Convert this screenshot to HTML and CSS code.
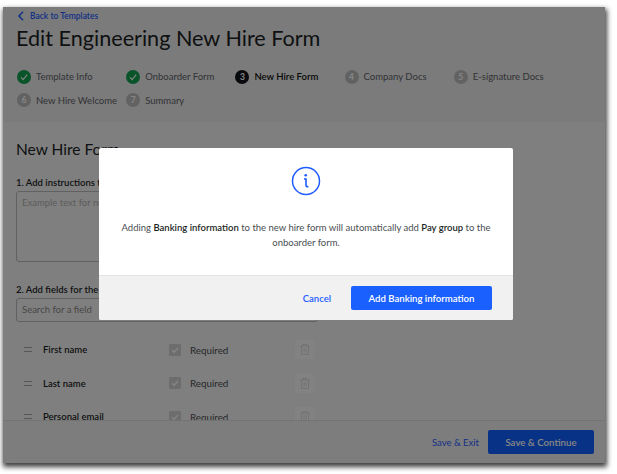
FILE: index.html
```html
<!DOCTYPE html>
<html lang="en">
<head>
<meta charset="utf-8">
<title>Edit Engineering New Hire Form</title>
<link rel="stylesheet" href="styles.css">
</head>
<body>
<div class="window">
  <header class="head">
    <a class="back" href="#">
      <svg class="back-icon" width="8" height="10" viewBox="0 0 8 10"><path d="M6 .8 2 5l4 4.200" fill="none" stroke="#1f5cff" stroke-width="1.500"/></svg>
      Back to Templates
    </a>
    <h1 class="title">Edit Engineering New Hire Form</h1>
    <ol class="steps">
      <li class="step"><span class="dot dot-done"><svg width="10" height="10" viewBox="0 0 10 10"><path d="M2 5.400 4.100 7.600 8.200 2.600" fill="none" stroke="#fff" stroke-width="1.100"/></svg></span>Template Info</li>
      <li class="step"><span class="dot dot-done"><svg width="10" height="10" viewBox="0 0 10 10"><path d="M2 5.400 4.100 7.600 8.200 2.600" fill="none" stroke="#fff" stroke-width="1.100"/></svg></span>Onboarder Form</li>
      <li class="step step-current"><span class="dot dot-current">3</span>New Hire Form</li>
      <li class="step"><span class="dot">4</span>Company Docs</li>
      <li class="step"><span class="dot">5</span>E-signature Docs</li>
      <li class="step"><span class="dot">6</span>New Hire Welcome</li>
      <li class="step"><span class="dot">7</span>Summary</li>
    </ol>
  </header>

  <main class="form">
    <h2 class="form-title">New Hire Form</h2>
    <p class="label">1. Add instructions to the new hire</p>
    <div class="textarea">Example text for new hires</div>
    <p class="label label-fields">2. Add fields for the new hire</p>
    <div class="search">Search for a field</div>
    <ul class="fields">
      <li class="field">
        <svg class="drag" width="8" height="5" viewBox="0 0 8 5"><path d="M0 .5h8M0 4.500h8" stroke="#a8a8a8"/></svg>
        <span class="field-name">First name</span>
        <span class="check"><svg width="8" height="8" viewBox="0 0 8 8"><path d="M1 4.200 3 6.200 7 2" fill="none" stroke="#fff" stroke-width="1.300"/></svg></span>
        <span class="req">Required</span>
        <span class="trash"><svg width="10" height="11" viewBox="0 0 10 11"><path d="M0 2h10M3 2V.5h4V2M1.500 2v8.500h7V2M4 4v4.500M6 4v4.500" fill="none" stroke="#d8d8d8" stroke-width=".9"/></svg></span>
      </li>
      <li class="field">
        <svg class="drag" width="8" height="5" viewBox="0 0 8 5"><path d="M0 .5h8M0 4.500h8" stroke="#a8a8a8"/></svg>
        <span class="field-name">Last name</span>
        <span class="check"><svg width="8" height="8" viewBox="0 0 8 8"><path d="M1 4.200 3 6.200 7 2" fill="none" stroke="#fff" stroke-width="1.300"/></svg></span>
        <span class="req">Required</span>
        <span class="trash"><svg width="10" height="11" viewBox="0 0 10 11"><path d="M0 2h10M3 2V.5h4V2M1.500 2v8.500h7V2M4 4v4.500M6 4v4.500" fill="none" stroke="#d8d8d8" stroke-width=".9"/></svg></span>
      </li>
      <li class="field">
        <svg class="drag" width="8" height="5" viewBox="0 0 8 5"><path d="M0 .5h8M0 4.500h8" stroke="#a8a8a8"/></svg>
        <span class="field-name">Personal email</span>
        <span class="check"><svg width="8" height="8" viewBox="0 0 8 8"><path d="M1 4.200 3 6.200 7 2" fill="none" stroke="#fff" stroke-width="1.300"/></svg></span>
        <span class="req">Required</span>
        <span class="trash"><svg width="10" height="11" viewBox="0 0 10 11"><path d="M0 2h10M3 2V.5h4V2M1.500 2v8.500h7V2M4 4v4.500M6 4v4.500" fill="none" stroke="#d8d8d8" stroke-width=".9"/></svg></span>
      </li>
    </ul>
  </main>

  <footer class="foot">
    <a class="foot-link" href="#">Save &amp; Exit</a>
    <a class="foot-btn" href="#">Save &amp; Continue</a>
  </footer>

  <div class="scrim"></div>

  <section class="modal" role="dialog">
    <div class="modal-body">
      <svg class="info" width="30" height="30" viewBox="0 0 30 30">
        <circle cx="15" cy="15" r="13.500" fill="none" stroke="#1f5cff" stroke-width="1.500"/>
        <circle cx="14.700" cy="9.300" r="1.300" fill="#1f5cff"/>
        <path d="M13 13h2v6.200q0 1.800 2.400 1.300" fill="none" stroke="#1f5cff" stroke-width="1.600"/>
      </svg>
      <p class="modal-text">Adding <b>Banking information</b> to the new hire form will automatically add <b>Pay group</b> to the onboarder form.</p>
    </div>
    <div class="modal-foot">
      <a class="cancel" href="#">Cancel</a>
      <a class="primary" href="#">Add Banking information</a>
    </div>
  </section>
</div>
</body>
</html>
```

FILE: styles.css
```css
* { box-sizing: border-box; }

html, body { height: 100%; }

body {
  margin: 0;
  padding: 7px 12px 11px 3px;
  background: #fff;
  font-family: Lato, "Liberation Sans", sans-serif;
  color: #1b1f24;
  overflow: hidden;
}

.window {
  position: relative;
  width: 602px;
  height: 456px;
  display: flex;
  flex-direction: column;
  background: #f4f4f4;
  overflow: hidden;
  box-shadow: 1px 3px 5px 1px rgba(0, 0, 0, .75);
}

a { text-decoration: none; }

.head {
  height: 115px;
  flex: none;
  background: #ececec;
  padding: 3px 13px 0;
}

.back {
  display: flex;
  align-items: center;
  gap: 5px;
  height: 11px;
  margin-left: 1px;
  font-size: 8.500px;
  font-weight: 600;
  color: #1f5cff;
}

.title {
  margin: 3px 0 0;
  font-size: 21.600px;
  line-height: 28px;
  font-weight: 400;
}

.steps {
  list-style: none;
  display: flex;
  flex-wrap: wrap;
  margin: 13px 0 0 1px;
  padding: 0;
}

.step {
  width: 109.200px;
  height: 23.500px;
  display: flex;
  align-items: center;
  gap: 5px;
  font-size: 9.500px;
  color: #5f6368;
  white-space: nowrap;
}

.step-current { color: #111; font-weight: 600; }

.dot {
  width: 14px;
  height: 14px;
  flex: none;
  display: flex;
  align-items: center;
  justify-content: center;
  border-radius: 50%;
  background: #bcbcbc;
  color: #fff;
  font-size: 8.500px;
  font-weight: 700;
}

.dot-done { background: #12a150; }
.dot-current { background: #10141a; }

.form {
  flex: 1;
  min-height: 0;
  overflow: hidden;
  padding: 17px 13px 0;
}

.form-title {
  margin: 0;
  font-size: 15.500px;
  line-height: 20px;
  font-weight: 400;
}

.label {
  margin: 18px 0 0;
  font-size: 9.500px;
  line-height: 12px;
  font-weight: 600;
}

.label-fields { margin-top: 22px; }

.textarea,
.search {
  width: 302px;
  margin-top: 2px;
  border: 1px solid #bbb;
  border-radius: 3px;
  font-size: 9.500px;
}

.textarea {
  height: 71px;
  padding: 5px;
  color: #b0b0b0;
}

.search {
  height: 24px;
  padding: 0 5px;
  line-height: 22px;
  color: #8a8a8a;
}

.fields {
  list-style: none;
  margin: 11px 0 0;
  padding: 0;
}

.field {
  height: 33.500px;
  display: flex;
  align-items: center;
  font-size: 9.500px;
}

.drag { margin-left: 8px; flex: none; }

.field-name {
  width: 126px;
  margin-left: 11px;
  font-weight: 600;
  color: #1b1f24;
}

.check {
  width: 12px;
  height: 12px;
  flex: none;
  display: flex;
  align-items: center;
  justify-content: center;
  border-radius: 1px;
  background: #d2d2d2;
}

.req {
  width: 105px;
  margin-left: 9px;
  font-size: 9.800px;
  color: #4a4e52;
}

.trash {
  width: 19px;
  height: 19px;
  flex: none;
  display: flex;
  align-items: center;
  justify-content: center;
  border-radius: 2px;
  background: #f9f9f9;
}

.foot {
  height: 43px;
  flex: none;
  display: flex;
  align-items: center;
  justify-content: flex-end;
  gap: 9px;
  padding-right: 11px;
  background: #f0f0f0;
  border-top: 1px solid #dcdcdc;
}

.foot-link {
  font-size: 9.500px;
  color: #1f5cff;
}

.foot-btn {
  width: 106px;
  height: 24px;
  display: flex;
  align-items: center;
  justify-content: center;
  border-radius: 2px;
  background: #1060ff;
  color: #fff;
  font-size: 9.700px;
  font-weight: 600;
}

/* dims everything behind the dialog */
.scrim {
  position: absolute;
  inset: 0;
  background: rgba(0, 0, 0, .48);
}

.modal {
  position: absolute;
  left: 96px;
  top: 141px;
  width: 414px;
  height: 172px;
  display: flex;
  flex-direction: column;
  background: #fff;
  border-radius: 2px;
  overflow: hidden;
}

.modal-body {
  height: 127px;
  flex: none;
  display: flex;
  flex-direction: column;
  align-items: center;
  padding: 18px 16px 0;
}

.info { flex: none; }

.modal-text {
  margin: 25px 0 0;
  font-size: 9.500px;
  line-height: 14.500px;
  text-align: center;
  color: #4a4e52;
}

.modal-text b { color: #1b1f24; font-weight: 600; }

.modal-foot {
  flex: 1;
  display: flex;
  align-items: center;
  justify-content: flex-end;
  gap: 20px;
  padding-right: 21px;
  background: #f1f1f1;
  border-top: 1px solid #e2e2e2;
}

.cancel {
  font-size: 9.500px;
  font-weight: 600;
  color: #1f5cff;
}

.primary {
  width: 141px;
  height: 24px;
  display: flex;
  align-items: center;
  justify-content: center;
  border-radius: 2px;
  background: #1a60ff;
  color: #fff;
  font-size: 9.600px;
  font-weight: 600;
}
```
